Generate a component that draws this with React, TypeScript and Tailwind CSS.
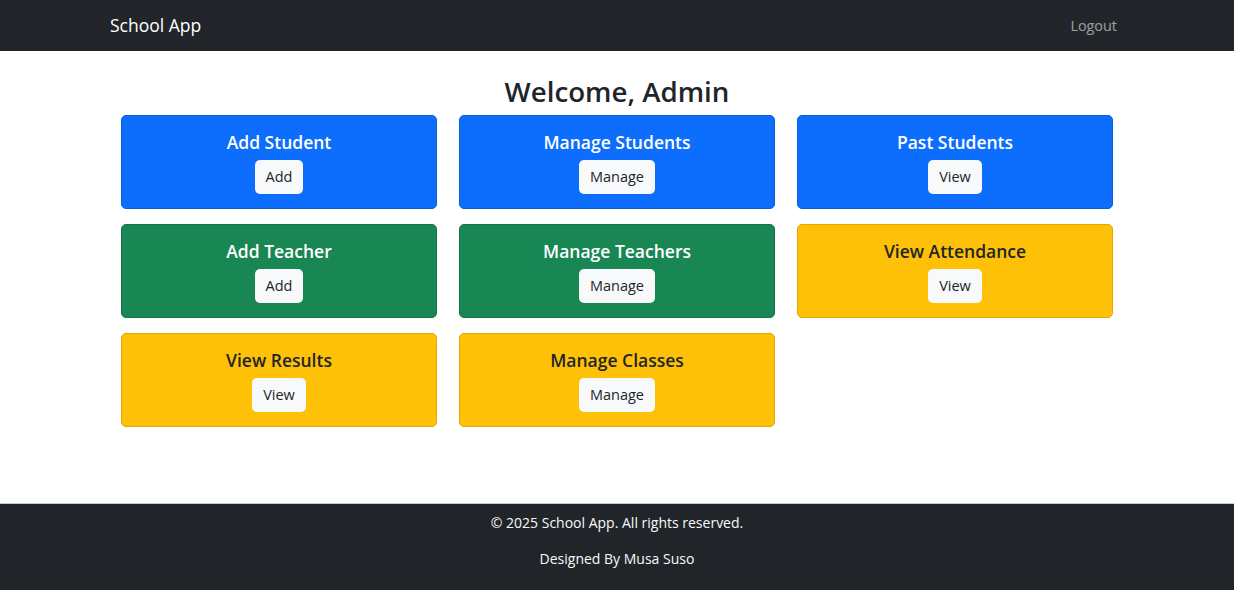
import React from 'react';

type Tile = {
  title: string;
  action: string;
  tone: 'blue' | 'green' | 'yellow';
};

const tiles: Tile[] = [
  { title: 'Add Student', action: 'Add', tone: 'blue' },
  { title: 'Manage Students', action: 'Manage', tone: 'blue' },
  { title: 'Past Students', action: 'View', tone: 'blue' },
  { title: 'Add Teacher', action: 'Add', tone: 'green' },
  { title: 'Manage Teachers', action: 'Manage', tone: 'green' },
  { title: 'View Attendance', action: 'View', tone: 'yellow' },
  { title: 'View Results', action: 'View', tone: 'yellow' },
  { title: 'Manage Classes', action: 'Manage', tone: 'yellow' },
];

const toneClass = {
  blue: 'bg-[#0d6efd] border-[#0b5ed7] text-white',
  green: 'bg-[#198754] border-[#157347] text-white',
  yellow: 'bg-[#ffc107] border-[#e0a800] text-[#212529]',
};

function DashCard({ tile }: { tile: Tile }) {
  return (
    <div
      className={`flex flex-col items-center rounded-[5px] border pt-[14px] pb-[14px] ${toneClass[tile.tone]}`}
    >
      <h5 className="text-[17.5px] font-semibold leading-[24px] mb-[6px]">{tile.title}</h5>
      <button className="h-[34px] px-[11px] rounded-[5px] bg-[#f8f9fa] text-[#212529] text-[14.5px] leading-none">
        {tile.action}
      </button>
    </div>
  );
}

export default function App() {
  return (
    <div className="min-h-screen flex flex-col bg-white font-['Open_Sans',sans-serif]">
      {/* navbar */}
      <nav className="h-[51px] bg-[#212529] flex items-center justify-between pl-[110px] pr-[117px]">
        <span className="text-[17.5px] text-white">School App</span>
        <a className="text-[14.4px] text-white/55">Logout</a>
      </nav>

      {/* dashboard */}
      <main className="h-[452px] flex flex-col items-center">
        <h2 className="mt-[21px] mb-[5px] h-[38px] leading-[38px] text-[27.7px] font-semibold text-[#212529]">
          Welcome, Admin
        </h2>
        <div className="w-[992px] grid grid-cols-3 gap-x-[22px] gap-y-[15px]">
          {tiles.map((t) => (
            <DashCard key={t.title} tile={t} />
          ))}
        </div>
      </main>

      {/* footer */}
      <footer className="h-[87px] bg-[#212529] border-t border-[#c8cbce] flex flex-col items-center text-[14px] text-[#f8f9fa]">
        <p className="mt-[8px] leading-[22px]">© 2025 School App. All rights reserved.</p>
        <p className="mt-[14px] leading-[22px]">Designed By Musa Suso</p>
      </footer>
    </div>
  );
}
